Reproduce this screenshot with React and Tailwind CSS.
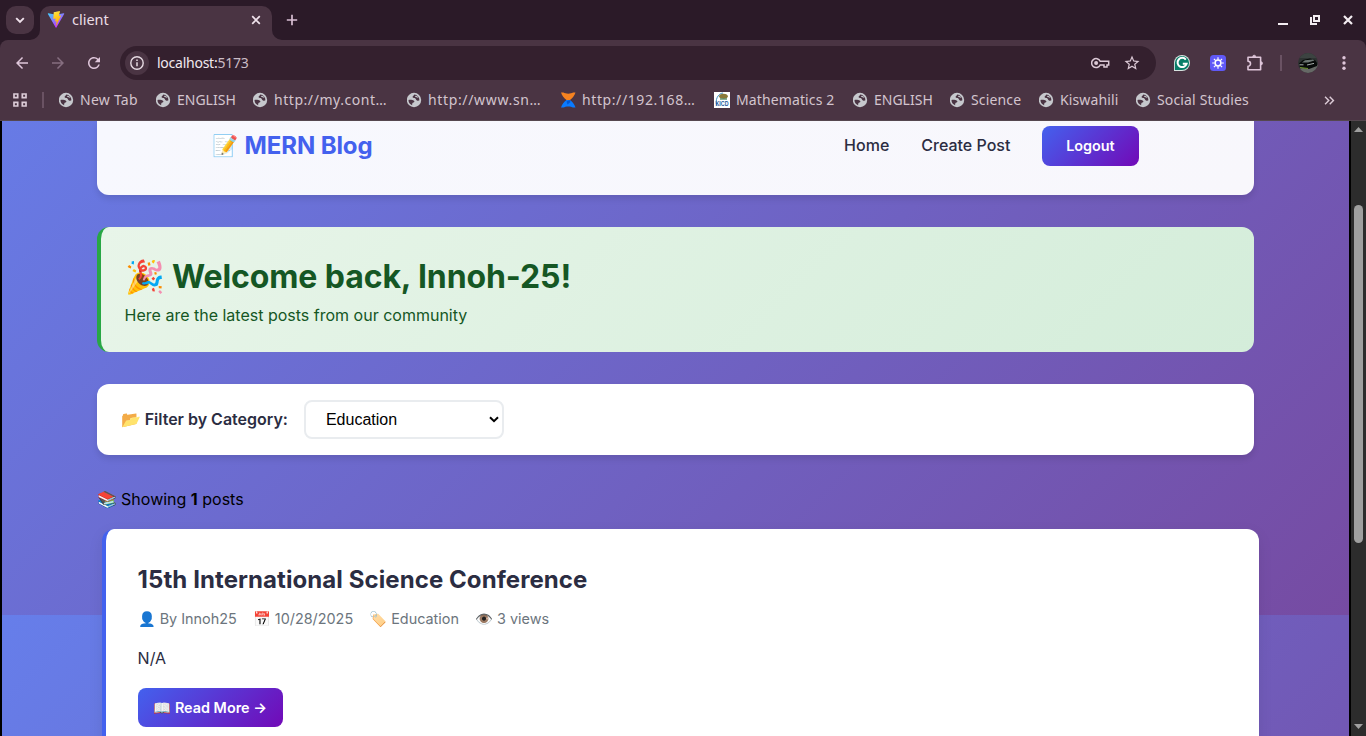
import React from 'react';
import { MdArrowBack, MdArrowForward, MdRefresh, MdStarOutline, MdKeyboardDoubleArrowRight } from 'react-icons/md';

function ViteIcon() {
  return (
    <svg width="18" height="18" viewBox="0 0 32 32" className="shrink-0">
      <defs>
        <linearGradient id="va" x1="0" y1="0" x2="0.6" y2="0.9">
          <stop offset="0" stopColor="#41d1ff" />
          <stop offset="1" stopColor="#bd34fe" />
        </linearGradient>
        <linearGradient id="vb" x1="0.4" y1="0" x2="0.6" y2="0.9">
          <stop offset="0" stopColor="#ffea83" />
          <stop offset="0.1" stopColor="#ffdd35" />
          <stop offset="1" stopColor="#ffa800" />
        </linearGradient>
      </defs>
      <path fill="url(#va)" d="M30.500 5.400 16.800 29.400a.8.8 0 0 1-1.400 0L1.600 5.400a.8.8 0 0 1 .8-1.200l13.700 2.600L29.500 4.200a.8.800 0 0 1 1 1.200Z" />
      <path fill="url(#vb)" d="m22.800 0-10.500 2a.4.4 0 0 0-.3.4l-.7 11.400a.4.4 0 0 0 .5.4l3-.7a.4.4 0 0 1 .5.500l-.9 4.400c0 .3.200.5.500.4l1.800-.5c.3-.1.600.1.500.4l-1.400 6.700c-.1.400.500.600.7.300l8.500-17.200a.4.4 0 0 0-.4-.6l-3 .6a.4.4 0 0 1-.5-.5l2-6.800a.4.4 0 0 0-.5-.5Z" />
    </svg>
  );
}

function GlobeIcon() {
  return (
    <svg width="16" height="16" viewBox="0 0 16 16" className="shrink-0">
      <circle cx="7" cy="8" r="7.200" fill="#c6c8cd" />
      <path d="M7.300 2.500c-.2 1.300-1.700 1-1.700 2.500 0 .9 1.100.9 2.100 1 1.300.2.900 1.900 2.200 2.400 1.100.4 1.900.3 2.500-.1A5.600 5.600 0 0 0 7.300 2.500Z" fill="#4a3443" />
      <path d="M1.500 8c1.700-.3 4.300-.2 5.400.8.900.8.500 1.500-.5 1.700-1.100.2-1.100 1-1.300 2.700A5.600 5.600 0 0 1 1.500 8Z" fill="#4a3443" />
      <path d="M8.100 4.500c1.300-.5 2.300.1 2.200 1.300" fill="none" stroke="#c6c8cd" strokeWidth="1.100" />
    </svg>
  );
}

function HourglassIcon() {
  return (
    <svg width="16" height="16" viewBox="0 0 16 16" className="shrink-0">
      <path d="M0 .5h2.500c2 1.500 7.500 1.500 9.500 0h2.500C13.500 4 11.500 6 9 8H5.500C3 6 1 4 0 .5Z" fill="#f58220" />
      <path d="M0 15.500C1 12 3 10 5.500 8H9c2.500 2 4.500 4 5.500 7.500H12c-2-1.500-7.500-1.500-9.500 0Z" fill="#0a7bff" />
      <path d="M5.500 9.500 8.500 8l1 2-3 2.500Z" fill="#0058d6" />
    </svg>
  );
}

function KicdIcon() {
  return (
    <svg width="16" height="16" viewBox="0 0 16 16" className="shrink-0">
      <rect width="16" height="16" fill="#fff" />
      <path d="M3 14A7.500 9 0 0 1 9 1" fill="none" stroke="#3b8fc4" strokeWidth="1" />
      <ellipse cx="9.500" cy="4.300" rx="4.300" ry="2.500" fill="#8a7a3a" />
      <path d="M6 7h7" stroke="#3f7d55" strokeWidth="1.200" />
      <text x="1.500" y="14" fontFamily="Liberation Sans, sans-serif" fontWeight="700" fontSize="7.500" textLength="13" lengthAdjust="spacingAndGlyphs" fill="#1d5a9e">KICD</text>
    </svg>
  );
}

const bookmarks = [
  { icon: 'globe', label: 'New Tab', box: 'w-[97px]', text: 'tracking-[0.25px]' },
  { icon: 'globe', label: 'ENGLISH', box: 'w-[97px]', text: 'tracking-[0px]' },
  { icon: 'globe', label: 'http://my.cont…', box: 'w-[154px]', text: 'tracking-[0.55px]' },
  { icon: 'globe', label: 'http://www.sn…', box: 'w-[154px]', text: 'tracking-[0.65px]' },
  { icon: 'hourglass', label: 'http://192.168…', box: 'w-[153px]', text: 'tracking-[0.6px]' },
  { icon: 'kicd', label: 'Mathematics 2', box: 'w-[139px]', text: 'pl-px tracking-[0.12px]' },
  { icon: 'globe', label: 'ENGLISH', box: 'w-[97px]', text: 'tracking-[0px]' },
  { icon: 'globe', label: 'Science', box: 'w-[89px]', text: 'tracking-[0.15px]' },
  { icon: 'globe', label: 'Kiswahili', box: 'w-[97px]', text: 'tracking-[0.12px]' },
  { icon: 'globe', label: 'Social Studies', box: 'w-[114px]', text: 'tracking-[0.15px]' },
];

function BookmarkIcon({ kind }) {
  if (kind === 'hourglass') return <HourglassIcon />;
  if (kind === 'kicd') return <KicdIcon />;
  return <GlobeIcon />;
}

function TabStrip() {
  return (
    <div className="flex h-10 shrink-0 items-end bg-[#2b1a28]">
      <div className="mb-[6px] ml-[6px] flex h-7 w-7 items-center justify-center rounded-[10px] bg-[#4a3443]">
        <svg width="10" height="7" viewBox="0 0 10 7" fill="none" stroke="#f0e2ec" strokeWidth="1.900"><path d="m1.200 1.200 3.800 3.800 3.800-3.800" /></svg>
      </div>
      <svg width="10" height="10" className="-ml-1 shrink-0"><path d="M10 0v10H0A10 10 0 0 0 10 0Z" fill="#4a3443" /></svg>
      <div className="flex h-[34px] w-[232px] items-center rounded-t-[10px] bg-[#4a3443] pb-[6px] pl-[7px] pr-[11px]">
        <ViteIcon />
        <span className="-mt-[2px] ml-[7px] text-[14.5px] leading-5 text-[#eadde6]">client</span>
        <svg width="10" height="10" viewBox="0 0 10 10" stroke="#f0e2ec" strokeWidth="1.700" className="ml-auto"><path d="m1.200 1.200 7.600 7.600M8.800 1.200 1.200 8.800" /></svg>
      </div>
      <svg width="10" height="10" className="shrink-0"><path d="M0 0v10h10A10 10 0 0 1 0 0Z" fill="#4a3443" /></svg>
      <svg width="12" height="12" viewBox="0 0 12 12" stroke="#d9bfd3" strokeWidth="1.700" className="mb-[14px] ml-1"><path d="M6 .8v10.400M.8 6h10.400" /></svg>
      <div className="mb-[14px] ml-auto mr-[12px] flex items-end gap-[20px]">
        <svg width="12" height="12" viewBox="0 0 12 12"><path d="M0 9h10v2H0z" fill="#f4edf2" /></svg>
        <svg width="12" height="12" viewBox="0 0 12 12" fill="none" stroke="#f4edf2" strokeWidth="2"><path d="M4 2h5v5H4zM1 3v7h6" /></svg>
        <svg width="12" height="12" viewBox="0 0 12 12" stroke="#f4edf2" strokeWidth="2.200"><path d="m2 2 8 8M10 2l-8 8" /></svg>
      </div>
    </div>
  );
}

function Toolbar() {
  return (
    <div className="flex h-[46px] items-center pl-[13px] pr-[14px]">
      <MdArrowBack size={18} className="text-[#dfc6da]" />
      <MdArrowForward size={18} className="ml-[18px] text-[#866e80]" />
      <MdRefresh size={18} className="ml-[18px] text-[#dfc6da]" />
      <div className="ml-[17px] flex h-[34px] w-[1036px] items-center rounded-full bg-[#34202e] pl-[5px] pr-[15px]">
        <div className="flex h-6 w-6 items-center justify-center rounded-full bg-[#4a3443]">
          <svg width="14" height="14" viewBox="0 0 14 14" fill="none" stroke="#e6dae2" strokeWidth="1.400"><circle cx="7" cy="7" r="6.200" /><path d="M7 6.200v4M7 3.600v1.400" strokeWidth="1.500" /></svg>
        </div>
        <span className="ml-2 text-[14px] leading-5 tracking-[-0.25px] text-[#f1e8ee]">localhost:<span className="text-[#cbbcc6]">5173</span></span>
        <svg width="20" height="12" viewBox="0 0 20 12" fill="none" stroke="#dcc9d6" strokeWidth="1.500" className="ml-auto">
          <path d="M9.200 4.200A4.500 4.500 0 1 0 9.200 8H13v2h3V8h1.700V4.200Z" />
          <circle cx="5.100" cy="6" r="2" fill="#dcc9d6" stroke="none" />
        </svg>
        <MdStarOutline size={18} className="ml-[12px] text-[#dcc9d6]" />
      </div>
      <svg width="16" height="16" viewBox="0 0 16 16" className="ml-[18px]">
        <path d="M8 0a8 8 0 1 1 0 16H0V8a8 8 0 0 1 8-8Z" fill="#d6e3df" />
        <path d="M8 .9A7.100 7.100 0 1 1 8 15.100H.9V8A7.100 7.100 0 0 1 8 .9Z" fill="#087d68" />
        <path d="M11.800 4.600A4.600 4.600 0 1 0 12.600 8.800H8.800" fill="none" stroke="#fff" strokeWidth="2" />
      </svg>
      <svg width="16" height="16" viewBox="0 0 16 16" className="ml-5" fill="none" stroke="#fff">
        <rect width="16" height="16" rx="3.500" fill="#6059f7" stroke="none" />
        <circle cx="8" cy="8" r="2.900" strokeWidth="1.500" />
        <path d="M8 2.200v2.500M8 11.300v2.500M2.200 8h2.500M11.300 8h2.500M3.900 3.900l1.800 1.800M10.300 10.300l1.800 1.800M12.100 3.900l-1.800 1.800M5.700 10.300l-1.800 1.800" strokeWidth="1.200" />
      </svg>
      <svg width="18" height="18" viewBox="0 0 18 18" className="ml-5" fill="none" stroke="#dfc6da" strokeWidth="1.600" strokeLinejoin="round">
        <path d="M2 3.200h12.600v12.600H2v-3.600a2.200 2.200 0 0 0 0-5Z" />
        <path d="M6.700 2.700a1.500 1.500 0 0 1 3 0ZM15 7.800a1.500 1.500 0 0 1 0 3Z" fill="#dfc6da" strokeWidth=".8" />
      </svg>
      <span className="ml-4 h-4 w-[2px] bg-[#6a5263]" />
      <svg width="20" height="20" viewBox="0 0 20 20" className="ml-4">
        <defs><clipPath id="av"><circle cx="10" cy="10" r="10" /></clipPath></defs>
        <g clipPath="url(#av)">
          <rect width="20" height="20" fill="#2e3332" />
          <path d="M0 0h20v5H0z" fill="#3c4341" />
          <path d="M0 16 20 12v8H0z" fill="#666966" />
          <path d="M1 10.500 5 7l7-1.500 5 1.500 2 3v3l-8 3-9-1.500Z" fill="#070a09" />
          <path d="m4 9.500 3-2.300 8-.8 1.500 1L10 9.600Z" fill="#6d7673" />
          <path d="M1.500 11.800h4M9 12l7-1.600" stroke="#b8c0bd" strokeWidth=".9" />
          <path d="M2 14.500l8 1" stroke="#6d9427" strokeWidth="1.100" />
        </g>
      </svg>
      <svg width="4" height="16" viewBox="0 0 4 16" fill="#dfc6da" className="ml-6"><circle cx="2" cy="2.700" r="1.700" /><circle cx="2" cy="8" r="1.700" /><circle cx="2" cy="13.300" r="1.700" /></svg>
    </div>
  );
}

function BookmarksBar() {
  return (
    <div className="flex h-[28px] items-center pl-[13px] pr-[28px] text-[14px] text-[#d3c4ce]">
      <svg width="14" height="14" viewBox="0 0 14 14" fill="none" stroke="#dccbd7" strokeWidth="1.700"><path d="M1 1h3.700v3.700H1zM9.300 1H13v3.700H9.300zM1 9.300h3.700V13H1zM9.300 9.300H13V13H9.300z" /></svg>
      <span className="ml-[15px] mr-[15px] h-4 w-[2px] shrink-0 bg-[#6a5263]" />
      {bookmarks.map((b, i) => (
        <div key={i} className={'flex shrink-0 items-center gap-[5px] whitespace-nowrap ' + b.box}>
          <BookmarkIcon kind={b.icon} />
          <span className={'leading-5 ' + b.text}>{b.label}</span>
        </div>
      ))}
      <MdKeyboardDoubleArrowRight size={17} className="ml-auto text-[#dccbd7]" />
    </div>
  );
}

function SiteHeader() {
  return (
    <header className="flex h-[74px] shrink-0 items-start justify-between rounded-b-xl bg-[linear-gradient(135deg,#f7f8fe,#f8f7fc)] pl-[115px] pr-[115px] pt-[5px] shadow-[0_4px_6px_rgba(0,0,0,0.1)]">
      <div className="flex h-[39px] items-center text-2xl font-bold tracking-[-0.1px] text-[#4361ee]"><span className="mr-[7px] text-[21px]">📝</span>MERN Blog</div>
      <nav className="flex items-center gap-8 font-medium text-[#2b2d42]">
        <span className="-ml-px -mt-[2px]">Home</span>
        <span className="-mt-[2px] mr-px">Create Post</span>
        <button className="-ml-px h-10 w-[97px] rounded-lg bg-[linear-gradient(135deg,#4361ee,#7209b7)] pr-px text-[14.4px] font-semibold text-white">Logout</button>
      </nav>
    </header>
  );
}

function PostCard() {
  return (
    <article className="ml-[5px] mr-[-5px] mt-[18px] h-[260px] shrink-0 rounded-xl border-l-4 border-[#4361ee] bg-white px-8 pt-8 text-[#2b2d42] shadow-[0_5px_15px_rgba(0,0,0,0.08)]">
      <h2 className="text-2xl font-bold leading-[38px] tracking-[0.08px]">15th International Science Conference</h2>
      <div className="mt-[8px] flex gap-4 text-[14.4px] leading-[23px] text-[#6c757d]">
        <span>👤 By Innoh25</span>
        <span>📅 10/28/2025</span>
        <span>🏷️ Education</span>
        <span>👁️ 3 views</span>
      </div>
      <p className="mt-[15px] leading-[26px]">N/A</p>
      <button className="mt-[17px] h-[39px] w-[145px] rounded-lg bg-[linear-gradient(135deg,#4361ee,#7209b7)] text-[14.4px] font-semibold text-white">📖 Read More →</button>
    </article>
  );
}

function Page() {
  return (
    <main className="flex h-full w-[1347px] flex-col overflow-hidden bg-[linear-gradient(135deg,#667eea_0%,#764ba2_100%)] bg-[length:1347px_615px] bg-[position:0_-121px] px-[94.6px] font-[Inter,sans-serif] text-base text-black">
      <SiteHeader />
      <section className="mt-8 h-[125px] shrink-0 rounded-xl border-l-4 border-[#28a745] bg-[linear-gradient(135deg,#e8f5e9,#d4edda)] px-6 pt-6 text-[#155724]">
        <h1 className="text-[32px] font-bold leading-[51px] tracking-[-0.1px]">🎉 Welcome back, Innoh-25!</h1>
        <p className="leading-[26px]">Here are the latest posts from our community</p>
      </section>
      <section className="mt-8 flex h-[71px] shrink-0 items-center rounded-xl bg-white px-6 shadow-[0_4px_6px_rgba(0,0,0,0.1)]">
        <label className="-mt-[2px] font-semibold text-[#2b2d42]">📂 Filter by Category:</label>
        <div className="ml-4 flex h-[39px] w-[200px] items-center justify-between rounded-lg border-2 border-[#e9ecef] pl-5 pr-[3px] font-['Liberation_Sans',sans-serif]">
          Education
          <svg width="10" height="7" viewBox="0 0 10 7" fill="none" stroke="#000" strokeWidth="2"><path d="m1 1.200 4 4 4-4" /></svg>
        </div>
      </section>
      <p className="mt-8 leading-6">📚 Showing <strong className="font-bold">1</strong> posts</p>
      <PostCard />
    </main>
  );
}

export default function App() {
  return (
    <div className="flex h-[736px] w-[1366px] flex-col overflow-hidden bg-[#2b1a28] font-['Noto_Sans',sans-serif]">
      <TabStrip />
      <div className="h-[81px] shrink-0 rounded-t-lg border-b border-[#55474f] bg-[#4a3443]">
        <Toolbar />
        <BookmarksBar />
      </div>
      <div className="flex h-[615px] shrink-0 bg-black pl-[2px]">
        <Page />
        <div className="ml-[2px] flex w-[15px] flex-col items-center bg-[#2c2c2c] pb-[7px] pt-[6px]">
          <svg width="9" height="5"><path d="M0 5 4.500 0 9 5Z" fill="#9f9f9f" /></svg>
          <div className="mt-[73px] h-[338px] w-[9px] shrink-0 rounded-full bg-[#9f9f9f]" />
          <svg width="9" height="5" className="mt-auto"><path d="M0 0h9L4.500 5Z" fill="#9f9f9f" /></svg>
        </div>
      </div>
    </div>
  );
}
